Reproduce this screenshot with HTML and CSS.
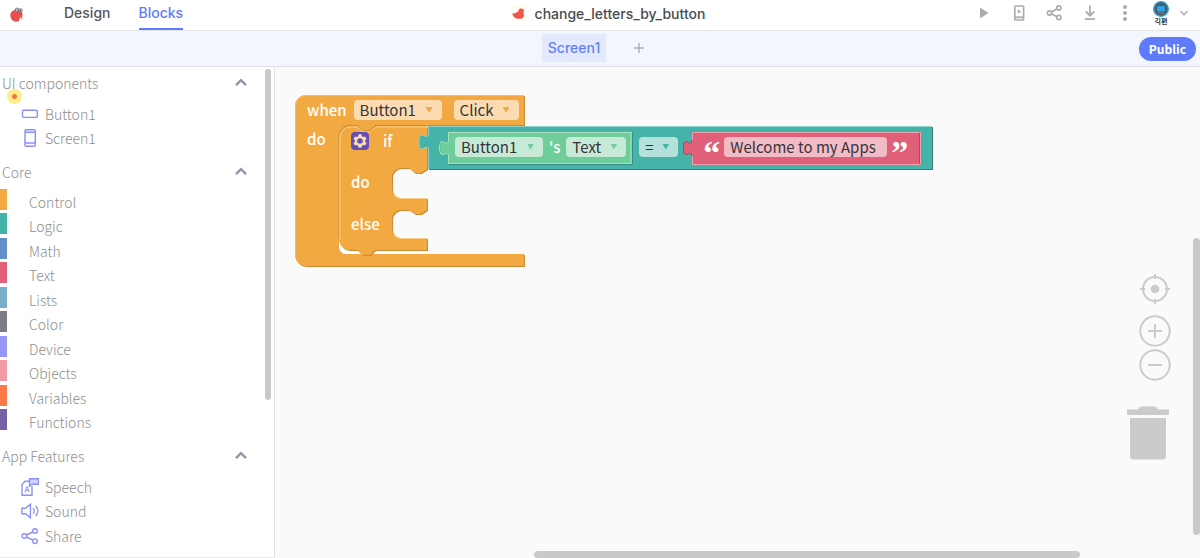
FILE: index.html
```html
<!DOCTYPE html>
<html lang="en">
<head>
<meta charset="utf-8">
<title>change_letters_by_button</title>
<meta name="viewport" content="width=device-width, initial-scale=1">
<link rel="stylesheet" href="styles.css">
</head>
<body>
<div class="app">
  <header class="topbar">
    <div class="topbar-left">
      <a class="brand" href="#" aria-label="Home">
        <svg width="16" height="16" viewBox="0 0 16 16"><path d="M1.500 6.500C2.500 4 5 2.600 8.500 2.800c3.200.2 5.100 2.200 5.100 4.800 0 .8-.3 1.400-.6 2l.9 1.800-1.200-.2.4 1.600-1.600-1C10.500 13.700 9 14.800 7 14.700 3.400 14.500.6 11 1.500 6.500Z" fill="#ea4f45"/><path d="M10 13l1.800-3.200 1 2" fill="#fff"/><circle cx="8" cy="3" r="1.900" fill="#e8ecee" stroke="#6b6f78"/><circle cx="11.600" cy="3.400" r="1.700" fill="#e8ecee" stroke="#6b6f78"/><circle cx="8.200" cy="3.100" r=".7" fill="#333"/><circle cx="11.400" cy="3.500" r=".7" fill="#333"/></svg>
      </a>
      <nav class="modes">
        <a href="#">Design</a>
        <a class="active" href="#">Blocks</a>
      </nav>
    </div>
    <div class="project">
      <svg width="15" height="15" viewBox="0 0 15 15"><rect width="15" height="15" fill="#fffaf2"/><path d="M1.200 7.200c1.200.5 2.400.5 3.200-.1C5.200 6.200 6.300 5.900 7.400 6c-.6-1.800.4-3.300 2.200-3.500 1-.1 2 .2 2.600.8l1.300.7-1 .7c.3 1 .2 1.800-.2 2.500 1 1.300.9 3-.2 4.200-1.400 1.500-4.200 1.800-6.600 1C3.300 11.700 1.600 9.800 1.200 7.200Z" fill="#ee5648"/></svg>
      <span>change_letters_by_button</span>
    </div>
    <div class="actions">
      <button aria-label="Run"><svg width="20" height="20" viewBox="0 0 20 20"><path d="M5 4.500l8.500 5.500L5 15.500Z" fill="#acacac"/></svg></button>
      <button aria-label="Live test"><svg width="20" height="20" viewBox="0 0 20 20"><rect x="4.800" y="3" width="8.800" height="14" rx="1" fill="none" stroke="#acacac" stroke-width="1.700"/><path d="M4.500 14.300h9" stroke="#acacac" stroke-width="1.800"/><path d="M7.800 6.300l3.600 2.200-3.600 2.200Z" fill="#acacac"/></svg></button>
      <button aria-label="Share"><svg width="20" height="20" viewBox="0 0 20 20" fill="none" stroke="#acacac" stroke-width="1.700"><circle cx="4.500" cy="10" r="2.100"/><circle cx="13.800" cy="5" r="2.100"/><circle cx="13.800" cy="14.500" r="2.100"/><path d="M6.500 9l5.300-3M6.500 11l5.300 2.600"/></svg></button>
      <button aria-label="Download"><svg width="20" height="20" viewBox="0 0 20 20" fill="none" stroke="#acacac" stroke-width="1.800"><path d="M10 2.500v10M5.800 8.500l4.200 4.200 4.200-4.200M5 16.200h10"/></svg></button>
      <button aria-label="More"><svg width="20" height="20" viewBox="0 0 20 20" fill="#acacac"><circle cx="10" cy="4" r="2"/><circle cx="10" cy="10" r="2"/><circle cx="10" cy="16" r="2"/></svg></button>
      <button class="account" aria-label="Account">
        <span class="avatar">
          <svg width="16" height="16" viewBox="0 0 16 16"><circle cx="8" cy="8" r="7.200" fill="#4b5a68" stroke="#2f9bc4" stroke-width="1.500"/><rect x="4" y="5" width="8" height="5.500" rx="1" fill="#2ea3e8"/><path d="M5 12h6" stroke="#8a8376"/></svg>
          <span class="avatar-name" lang="ko">긱편</span>
        </span>
        <svg width="10" height="10" viewBox="0 0 10 10"><path d="M1.500 3l3.500 3.700L8.500 3" fill="none" stroke="#acacac" stroke-width="1.400"/></svg>
      </button>
    </div>
  </header>

  <div class="screens">
    <div class="screen-tabs">
      <button class="screen-tab">Screen1</button>
      <button class="add-screen" aria-label="Add screen"><svg width="12" height="12" viewBox="0 0 12 12"><path d="M6 1v10M1 6h10" stroke="#adadad" stroke-width="1.500"/></svg></button>
    </div>
    <button class="public">Public</button>
  </div>

  <div class="main">
    <aside class="sidebar">
      <section>
        <h2><button>UI components <svg width="14" height="9" viewBox="0 0 14 9"><path d="M2 7.200l5-5 5 5"/></svg></button></h2>
        <ul class="components">
          <li><a href="#"><svg width="18" height="18" viewBox="0 0 18 18"><rect x="1.500" y="5.200" width="14.800" height="7.200" rx="1"/></svg>Button1</a></li>
          <li><a href="#"><svg width="18" height="18" viewBox="0 0 18 18"><rect x="4" y="0.700" width="10.300" height="16.600" rx="1"/><path d="M4 3.300h10.300M4 14h10.300"/></svg>Screen1</a></li>
        </ul>
      </section>
      <section>
        <h2><button>Core <svg width="14" height="9" viewBox="0 0 14 9"><path d="M2 7.200l5-5 5 5"/></svg></button></h2>
        <ul class="categories">
          <li class="control"><a href="#">Control</a></li>
          <li class="logic"><a href="#">Logic</a></li>
          <li class="math"><a href="#">Math</a></li>
          <li class="text"><a href="#">Text</a></li>
          <li class="lists"><a href="#">Lists</a></li>
          <li class="color"><a href="#">Color</a></li>
          <li class="device"><a href="#">Device</a></li>
          <li class="objects"><a href="#">Objects</a></li>
          <li class="variables"><a href="#">Variables</a></li>
          <li class="functions"><a href="#">Functions</a></li>
        </ul>
      </section>
      <section>
        <h2><button>App Features <svg width="14" height="9" viewBox="0 0 14 9"><path d="M2 7.200l5-5 5 5"/></svg></button></h2>
        <ul class="components">
          <li><a href="#"><svg width="18" height="18" viewBox="0 0 18 18"><path d="M8 3.200H4.200L1 6.200v11h10V8"/><path d="M8.500.8h9v5.500h-6.500l-2.500 2Z" fill="#cfd3fb"/><path d="M3.800 14.200L6 8.500l2.300 5.700M4.500 12.400h3" stroke-width="1"/></svg>Speech</a></li>
          <li><a href="#"><svg width="18" height="18" viewBox="0 0 18 18"><path d="M.9 6.300h3.600L9.400 2.300v13.400L4.500 11.700H.9Z"/><path d="M12 6.200c1.500 1.500 1.500 4 0 5.500M14.500 4c3 3 3 7 0 10"/></svg>Sound</a></li>
          <li><a href="#"><svg width="18" height="18" viewBox="0 0 18 18"><circle cx="3.300" cy="9" r="2.300"/><circle cx="14" cy="4" r="2.300"/><circle cx="14" cy="14.200" r="2.300"/><path d="M5.400 8l6.500-3M5.400 10l6.500 3.200"/></svg>Share</a></li>
        </ul>
      </section>
      <span class="pointer"></span>
      <span class="side-scroll"></span>
    </aside>

    <main class="workspace">
      <div class="block-stack">
        <svg class="shapes" width="640" height="175" viewBox="295 95 640 175">
          <path fill="#c98a33" transform="translate(1 1)" d="M295 106a11 11 0 0 1 11-11H524V125H376l-6 5h-7l-6-5H350a11 11 0 0 0-11 11V247a7 7 0 0 0 7 7H524V266H306a11 11 0 0 1-11-11Z"/>
          <path fill="#f2a942" d="M295 106a11 11 0 0 1 11-11H524V125H376l-6 5h-7l-6-5H350a11 11 0 0 0-11 11V247a7 7 0 0 0 7 7H524V266H306a11 11 0 0 1-11-11Z"/>
          <path fill="none" stroke="#f6bd6a" d="M295.500 255V106a10.500 10.500 0 0 1 10.500-10.500H524"/>
          <path fill="#fff" d="M339 180V247a7 7 0 0 0 7 7H428V240H360Z"/>
          <path fill="#c98a33" transform="translate(1 1)" d="M339 137a11 11 0 0 1 11-11H357l6 5h7l6-5H427V169l-6 4h-6l-6-5H401a9 9 0 0 0-9 9v12a9 9 0 0 0 9 9H427V210l-6 4h-6l-6-4H401a9 9 0 0 0-9 9v10a9 9 0 0 0 9 9H427V250H375l-5 5h-7l-6-5H350a11 11 0 0 1-11-11Z"/>
          <path fill="#f2a942" d="M339 137a11 11 0 0 1 11-11H357l6 5h7l6-5H427V169l-6 4h-6l-6-5H401a9 9 0 0 0-9 9v12a9 9 0 0 0 9 9H427V210l-6 4h-6l-6-4H401a9 9 0 0 0-9 9v10a9 9 0 0 0 9 9H427V250H375l-5 5h-7l-6-5H350a11 11 0 0 1-11-11Z"/>
          <path fill="none" stroke="#d08f35" d="M339 238V137a11 11 0 0 1 11-11.500H357l6 5h7l6-5H428"/>
          <path fill="none" stroke="#f9cf8d" d="M340 240V138a10 10 0 0 1 10-11H357l6 5h7l6-5H428M394 195q3 3.500 7 3.500H427M394 235q3 3.500 7 3.500H427"/>
          <path fill="#318179" transform="translate(1 1)" d="M428 126H932V169H428Z"/>
          <path fill="#45b3a8" d="M428 126H932V169H428V150C428 141 419 157 419 142S428 143 428 133Z"/>
          <path fill="none" stroke="#8fd1ca" d="M428.500 169V150C428.500 141 419 157 419 142S428.500 143 428.500 133V126.500H932"/>
          <path fill="#6fcd9a" d="M448 132H632V164H448V156C448 148 439.500 162 439.500 148S448 149 448 140Z"/>
          <path fill="none" stroke="#348d84" d="M632.500 133V164.500H449M440 143Q439 148 440 152"/>
          <path fill="none" stroke="#a9e2c3" d="M632 132.500H448.500V140C448.500 149 439.500 134 439.500 148S448.500 148 448.500 156V163.500H631V133"/>
          <path fill="#e05f79" d="M692 132H920V164H692V156C692 148 683.500 162 683.500 148S692 149 692 140Z"/>
          <path fill="none" stroke="#eda0b0" d="M920.500 132.500H692.500V140M692.500 156V164.500H920.500V132"/>
          <path fill="none" stroke="#a64b61" d="M692 156C692 148 683.500 162 683.500 148S692 149 692 140M919.500 133V163.500"/>
        </svg>
        <div class="event-row">
          <span>when</span>
          <span class="field orange wide"><select aria-label="Component"><option>Button1</option></select></span>
          <span class="field orange event"><select aria-label="Event"><option>Click</option></select></span>
        </div>
        <div class="event-body">
          <span class="do">do</span>
          <div class="condition">
            <div class="if-row">
              <div class="if-label">
                <button class="gear" aria-label="Change block"><svg width="18" height="18" viewBox="0 0 18 18"><path d="M7.600 2.300h2.800l.5 2 1.300.7 1.900-.6 1.500 2.500-1.500 1.400v1.400l1.500 1.400-1.500 2.500-1.900-.6-1.300.7-.5 2H7.600l-.5-2-1.300-.7-1.900.6-1.500-2.500 1.500-1.400V8.300L2.400 6.900l1.500-2.500 1.900.6 1.300-.7ZM9 6.200a2.800 2.800 0 1 0 0 5.600 2.800 2.800 0 0 0 0-5.600Z" fill="#fbdcae" fill-rule="evenodd"/></svg></button>
                <span>if</span>
              </div>
              <div class="compare">
                <div class="getter">
                  <span class="field green wide"><select aria-label="Component"><option>Button1</option></select></span>
                  <span>'s</span>
                  <span class="field green property"><select aria-label="Property"><option>Text</option></select></span>
                </div>
                <span class="field teal operator"><select aria-label="Operator"><option>=</option></select></span>
                <div class="literal">
                  <span class="quote">“</span>
                  <input class="value" aria-label="Text" value="Welcome to my Apps">
                  <span class="quote">”</span>
                </div>
              </div>
            </div>
            <div class="branch">do</div>
            <div class="branch">else</div>
          </div>
        </div>
      </div>

      <div class="canvas-tools">
        <button aria-label="Center"><svg width="32" height="32" viewBox="0 0 32 32" fill="none" stroke="#cbcbcd" stroke-width="2"><circle cx="16" cy="16" r="12"/><circle cx="16" cy="16" r="4.300" fill="#cbcbcd" stroke="none"/><path d="M16 1v5M16 26v5M1 16h5M26 16h5"/></svg></button>
        <button class="zoom-in" aria-label="Zoom in"><svg width="32" height="32" viewBox="0 0 32 32" fill="none" stroke="#cbcbcd" stroke-width="2"><circle cx="16" cy="16" r="14.700"/><path d="M16 9v14M9 16h14"/></svg></button>
        <button class="zoom-out" aria-label="Zoom out"><svg width="32" height="32" viewBox="0 0 32 32" fill="none" stroke="#cbcbcd" stroke-width="2"><circle cx="16" cy="16" r="14.700"/><path d="M9 16h14"/></svg></button>
      </div>
      <button class="trash" aria-label="Trash"><svg width="42" height="54" viewBox="0 0 42 54" fill="#cbcbcb"><path d="M0 3.500h11q1-3 4-3h12q3 0 4 3h11v5.500H0ZM3 12h36v38q0 3.500-3.500 3.500h-29Q3 53.500 3 50Z"/></svg></button>
      <span class="scroll-v"></span>
      <span class="scroll-h"></span>
    </main>
  </div>
</div>
</body>
</html>
```
FILE: styles.css
```css
* {
  box-sizing: border-box;
}

body {
  margin: 0;
  font-family: "Noto Sans CJK KR", "Noto Sans", sans-serif;
  font-size: 14px;
}

button {
  padding: 0;
  border: 0;
  background: none;
  font: inherit;
  color: inherit;
  cursor: pointer;
}

a {
  color: inherit;
  text-decoration: none;
}

svg {
  display: block;
  flex: none;
}

.app {
  display: flex;
  flex-direction: column;
  height: 100vh;
  overflow: hidden;
}

/* Top bar */

.topbar {
  display: grid;
  grid-template-columns: 1fr auto 1fr;
  flex: none;
  height: 31px;
  border-bottom: 1px solid #e4e6ea;
  background: #fff;
  font-family: Inter, sans-serif;
  font-size: 14px;
  font-weight: 500;
}

.topbar-left {
  display: flex;
  gap: 39px;
  padding-left: 9px;
}

.brand {
  align-self: center;
}

.modes {
  display: flex;
  gap: 28px;
  line-height: 25px;
  color: #54565e;
}

.modes .active {
  border-bottom: 2px solid #5d7bfa;
  color: #5d7bfa;
}

.project {
  display: flex;
  align-items: center;
  gap: 9px;
  padding: 0 0 4px 16px;
  color: #4a4a4f;
}

.actions {
  display: flex;
  justify-content: flex-end;
  align-items: center;
  gap: 15px;
  padding: 0 11px 4px 0;
}

.account {
  display: flex;
  align-items: center;
  gap: 10px;
  height: 24px;
  margin-left: 3px;
}

.avatar {
  display: flex;
  flex-direction: column;
  align-items: center;
  width: 16px;
}

.avatar-name {
  font: 700 7px/8px "Noto Sans CJK KR", sans-serif;
  color: #333;
  white-space: nowrap;
}

/* Screen tabs */

.screens {
  display: grid;
  grid-template-columns: 1fr auto 1fr;
  align-items: center;
  flex: none;
  height: 36px;
  padding-right: 4px;
  border-bottom: 1px solid #dcdfe4;
  background: #f3f7fd;
}

.screen-tabs {
  display: flex;
  align-items: center;
  grid-column: 2;
  gap: 27px;
  padding: 0 9px 2px 0;
}

.screen-tab {
  height: 28px;
  padding: 0 6px;
  background: #e4eafe;
  font: 500 14px/28px Inter, sans-serif;
  color: #6580fa;
}

.public {
  grid-column: 3;
  justify-self: end;
  height: 24px;
  padding: 0 10px;
  border-radius: 12px;
  background: #5d7bfa;
  font-size: 12px;
  font-weight: 700;
  line-height: 24px;
  color: #fff;
}

/* Sidebar */

.main {
  display: flex;
  flex: 1;
  min-height: 0;
}

.sidebar {
  position: relative;
  flex: none;
  width: 275px;
  border-right: 1px solid #dfe1e5;
  border-bottom: 1px solid #ececee;
  background: #fff;
  font-weight: 300;
  color: #8e8e8e;
  overflow: hidden;
}

.sidebar h2 {
  margin: 0;
  font: inherit;
}

.sidebar h2 button {
  display: flex;
  justify-content: space-between;
  align-items: center;
  width: 100%;
  height: 31px;
  padding: 0 26px 0 2px;
}

.sidebar h2 path {
  fill: none;
  stroke: #9296a8;
  stroke-width: 2.4;
}

.sidebar ul {
  margin: 0;
  list-style: none;
}

.sidebar li {
  height: 24px;
  line-height: 24px;
}

.sidebar li:nth-child(even) {
  height: 25px;
}

.components {
  padding: 4px 0 5px 21px;
}

.components a {
  display: flex;
  align-items: center;
  gap: 6px;
}

.components svg {
  fill: none;
  stroke: #8b90f8;
  stroke-width: 1.4;
}

.categories {
  padding: 2px 0 6px;
}

.categories a {
  display: flex;
  gap: 22px;
  line-height: 26px;
}

.categories a::before {
  content: "";
  width: 7px;
  height: 21px;
  background: var(--tint);
}

.control { --tint: #f2a942; }
.logic { --tint: #45b3a8; }
.math { --tint: #658fcb; }
.text { --tint: #e05f79; }
.lists { --tint: #79aecb; }
.color { --tint: #7d7986; }
.device { --tint: #9896f4; }
.objects { --tint: #f09ba4; }
.variables { --tint: #fa7a4a; }
.functions { --tint: #7860a4; }

.pointer {
  position: absolute;
  top: 22px;
  left: 7px;
  width: 15px;
  height: 15px;
  border-radius: 50%;
  background: radial-gradient(circle, #f0754a 0 2px, #fdee86 3px);
}

.side-scroll {
  position: absolute;
  top: 2px;
  right: 3px;
  width: 6px;
  height: 331px;
  border-radius: 3px;
  background: #c9c9c9;
}

/* Workspace */

.workspace {
  position: relative;
  flex: 1;
  min-width: 0;
  background: #fafafa;
  overflow: hidden;
}

.block-stack {
  position: absolute;
  top: 28px;
  left: 20px;
  font-size: 15px;
  font-weight: 500;
  line-height: 20px;
  color: #fff;
}

.shapes {
  position: absolute;
  top: 0;
  left: 0;
}

.event-row,
.event-body {
  position: relative;
  display: flex;
  padding-left: 12px;
}

.event-row {
  align-items: center;
  gap: 7px;
  height: 30px;
}

.event {
  width: 65px;
  margin-left: 5px;
}

.do {
  width: 44px;
  padding-top: 4px;
}

.if-row {
  display: flex;
  height: 43px;
}

.if-label {
  display: flex;
  align-items: center;
  gap: 14px;
  width: 77px;
  height: 32px;
}

.gear {
  border-radius: 4px;
  background: #6450b4;
}

.compare,
.getter,
.literal {
  display: flex;
  align-items: center;
}

.compare {
  padding-left: 27px;
}

.getter {
  gap: 6px;
  padding-right: 13px;
}

.literal {
  gap: 4px;
  padding-left: 25px;
}

.branch {
  height: 42px;
  padding-top: 4px;
}

.field {
  position: relative;
  display: block;
  height: 20px;
  border-radius: 4px;
  background: var(--fill);
}

.field select,
.value {
  display: block;
  width: 100%;
  height: 20px;
  padding: 0 6px;
  border: 0;
  background: none;
  font: 400 15px/20px "Noto Sans CJK KR", "Noto Sans", sans-serif;
  color: #37333a;
  appearance: none;
}

.field::after {
  content: "";
  position: absolute;
  top: 7px;
  right: 9px;
  width: 7px;
  height: 6px;
  background: var(--arrow);
  clip-path: polygon(0 0, 100% 0, 50% 100%);
  pointer-events: none;
}

.orange { --fill: #fbdcb2; --arrow: #f2a942; }
.green { --fill: #c6ead6; --arrow: #6fcd9a; }
.teal { --fill: #b5e1dc; --arrow: #45b3a8; }

.wide { width: 88px; }
.property { width: 60px; }
.operator { width: 39px; }

.value {
  width: 163px;
  border-radius: 4px;
  background: #f2bcc7;
}

.quote {
  width: 17px;
  height: 20px;
  font: 700 34px/32px "Liberation Serif", serif;
  text-align: center;
}

.canvas-tools {
  position: absolute;
  top: 206px;
  right: 29px;
  display: flex;
  flex-direction: column;
}

.zoom-in {
  margin-top: 10px;
}

.zoom-out {
  margin-top: 2px;
}

.trash {
  position: absolute;
  top: 339px;
  right: 31px;
}

.scroll-v,
.scroll-h {
  position: absolute;
  border-radius: 4px;
  background: #c9c9c9;
}

.scroll-v {
  top: 171px;
  right: 0;
  width: 7px;
  height: 297px;
}

.scroll-h {
  bottom: 0;
  left: 28%;
  width: 59%;
  height: 7px;
}
```
